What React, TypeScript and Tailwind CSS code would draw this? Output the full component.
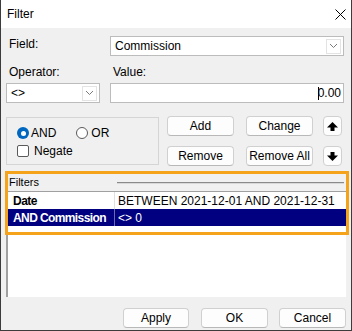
import React from "react";

const font = "font-['Liberation_Sans',Arial,sans-serif]";

function Chevron() {
  return (
    <svg width="9" height="6" viewBox="0 0 9 6">
      <path d="M1 1 L4.5 4.5 L8 1" fill="none" stroke="#7a7a7a" strokeWidth="1" />
    </svg>
  );
}

function Combo({ text, width }: { text: string; width: string }) {
  return (
    <div className={`${width} h-[20px] bg-white border border-[#bcbcbc] flex items-center justify-between pl-[4px] pr-[2px]`}>
      <span className="text-[12px] leading-none">{text}</span>
      <div className="w-[15px] h-[15px] border border-[#e3e3e3] flex items-center justify-center">
        <Chevron />
      </div>
    </div>
  );
}

function Btn({ label, width }: { label: string; width: string }) {
  return (
    <div
      className={`${width} h-[20px] bg-[#fdfdfd] border border-[#d0d0d0] border-b-[#b8b8b8] rounded-[4px] flex items-center justify-center text-[12px] leading-none whitespace-nowrap`}
    >
      {label}
    </div>
  );
}

function ArrowBtn({ down }: { down?: boolean }) {
  return (
    <div className="w-[19px] h-[20px] bg-[#fdfdfd] border border-[#d0d0d0] rounded-[4px] flex items-center justify-center">
      <svg width="11" height="9" viewBox="0 0 11 9" style={{ transform: down ? "rotate(180deg)" : undefined }}>
        <polygon points="5.5,0 11,5.5 0,5.5" fill="#000" />
        <rect x="3.5" y="5" width="4" height="4" fill="#000" />
      </svg>
    </div>
  );
}

export default function App() {
  return (
    <div className={`${font} w-[352px] h-[331px] bg-[#f0f0f0] border-x border-b border-[#3c3c3c] flex flex-col text-black`}>
      {/* title bar */}
      <div className="h-[28px] bg-white flex items-center justify-between pl-[6px] pr-[5px]">
        <span className="text-[12px] leading-none">Filter</span>
        <svg width="11" height="11" viewBox="0 0 11 11">
          <path d="M0.5 0.5 L10.5 10.5 M10.5 0.5 L0.5 10.5" stroke="#000" strokeWidth="1" />
        </svg>
      </div>

      <div className="flex flex-col px-[5px]">
        {/* field */}
        <div className="mt-[8px] flex">
          <div className="w-[104px] pl-[3px] pt-[1px] text-[12px] leading-[14px]">Field:</div>
          <Combo text="Commission" width="w-[234px]" />
        </div>

        {/* labels */}
        <div className="mt-[9px] h-[14px] flex text-[12px] leading-[14px]">
          <div className="w-[104px] pl-[3px]">Operator:</div>
          <div className="pl-[3px]">Value:</div>
        </div>

        {/* operator / value */}
        <div className="mt-[4px] flex">
          <Combo text="<>" width="w-[94px]" />
          <div className="ml-[10px] w-[234px] h-[20px] bg-white border border-[#bcbcbc] flex items-center justify-end pr-[2px]">
            <span className="w-px h-[13px] bg-black mr-[-1px]" />
            <span className="text-[12px] leading-none">0.00</span>
          </div>
        </div>

        {/* logic + buttons */}
        <div className="mt-[13px] flex">
          <div className="mt-px w-[153px] h-[48px] border border-[#d5d5d5] flex flex-col pl-[10px] pt-[7px] text-[12px] leading-none">
            <div className="flex items-center h-[16px]">
              <span className="w-[12px] h-[12px] rounded-full bg-[#0067c0] flex items-center justify-center">
                <span className="w-[5px] h-[5px] rounded-full bg-white" />
              </span>
              <span className="ml-[2px]">AND</span>
              <span className="ml-[20px] w-[12px] h-[12px] rounded-full border border-[#5a5a5a] bg-white" />
              <span className="ml-[3px]">OR</span>
            </div>
            <div className="flex items-center h-[16px] mt-[2px]">
              <span className="w-[12px] h-[12px] rounded-[2px] border border-[#5a5a5a] bg-white" />
              <span className="ml-[5px]">Negate</span>
            </div>
          </div>
          <div className="ml-[8px] flex flex-col gap-[10px]">
            <div className="flex">
              <Btn label="Add" width="w-[67px]" />
              <div className="ml-[12px]">
                <Btn label="Change" width="w-[67px]" />
              </div>
              <div className="ml-[10px]">
                <ArrowBtn />
              </div>
            </div>
            <div className="flex">
              <Btn label="Remove" width="w-[67px]" />
              <div className="ml-[12px]">
                <Btn label="Remove All" width="w-[67px]" />
              </div>
              <div className="ml-[10px]">
                <ArrowBtn down />
              </div>
            </div>
          </div>
        </div>

        {/* list */}
        <div className="mt-[5px] w-[340px] h-[126px] bg-white border-l-2 border-[#a0a0a0] flex flex-col">
          <div className="-ml-[3px] w-[344px] border-[3px] border-[#f5a31a] flex flex-col">
            <div className="h-[17px] bg-[#f0f0f0] flex items-center">
              <span className="w-[109px] pl-px text-[11px] leading-none">Filters</span>
              <div className="flex-1 mr-[2px] flex flex-col">
                <div className="h-px bg-[#8a8a8a]" />
                <div className="h-px bg-[#d8d8d8]" />
              </div>
            </div>
            <div className="h-px bg-[#a0a0a0]" />
            <div className="h-[17px] bg-white flex text-[12px] leading-none">
              <div className="w-[107px] pl-[5px] flex items-center font-bold tracking-[-0.5px] whitespace-nowrap border-r border-[#e0e0e0]">Date</div>
              <div className="pl-[3px] flex items-center whitespace-nowrap">BETWEEN 2021-12-01 AND 2021-12-31</div>
            </div>
            <div className="h-[17px] bg-[#000080] text-white flex text-[12px] leading-none">
              <div className="w-[107px] pl-[5px] flex items-center font-bold tracking-[-0.6px] whitespace-nowrap border-r border-[#6a6aa8]">AND Commission</div>
              <div className="pl-[3px] flex items-center">&lt;&gt; 0</div>
            </div>
            <div className="h-[6px] bg-white" />
          </div>
        </div>

        {/* bottom buttons */}
        <div className="mt-[11px] flex justify-end">
          <Btn label="Apply" width="w-[66px]" />
          <div className="ml-[12px]">
            <Btn label="OK" width="w-[67px]" />
          </div>
          <div className="ml-[11px]">
            <Btn label="Cancel" width="w-[67px]" />
          </div>
        </div>
      </div>
    </div>
  );
}
